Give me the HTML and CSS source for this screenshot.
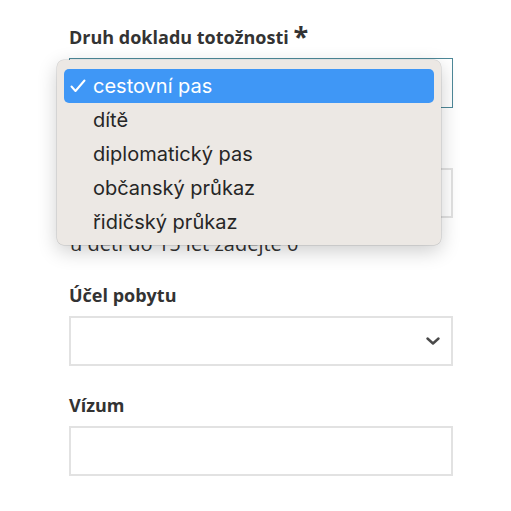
FILE: index.html
```html
<!DOCTYPE html>
<html lang="cs">
<head>
<meta charset="utf-8">
<title>Formulář</title>
<link rel="stylesheet" href="styles.css">
</head>
<body>
<form class="form">
  <div class="group">
    <label class="label">Druh dokladu totožnosti <span class="req">*</span></label>
    <div class="field select focused">
      <svg class="chev" width="14" height="8" viewBox="0 0 14 8"><polyline points="1.5,1.5 7,6.5 12.5,1.5" fill="none" stroke="#4a4a4a" stroke-width="2.4" stroke-linecap="round" stroke-linejoin="round"/></svg>
    </div>
    <ul class="menu">
      <li class="item selected"><svg class="check" width="16" height="14" viewBox="0 0 16 14"><polyline points="1.5,7.5 5.5,12 14.5,1.5" fill="none" stroke="#ffffff" stroke-width="2" stroke-linecap="round" stroke-linejoin="round"/></svg>cestovní pas</li>
      <li class="item">dítě</li>
      <li class="item">diplomatický pas</li>
      <li class="item">občanský průkaz</li>
      <li class="item">řidičský průkaz</li>
    </ul>
  </div>
  <div class="group">
    <label class="label"></label>
    <div class="field"></div>
    <p class="help">u dětí do 15 let zadejte 0</p>
  </div>
  <div class="group">
    <label class="label">Účel pobytu</label>
    <div class="field select">
      <svg class="chev" width="14" height="8" viewBox="0 0 14 8"><polyline points="1.5,1.5 7,6.5 12.5,1.5" fill="none" stroke="#4a4a4a" stroke-width="2.4" stroke-linecap="round" stroke-linejoin="round"/></svg>
    </div>
  </div>
  <div class="group">
    <label class="label">Vízum</label>
    <div class="field"></div>
  </div>
</form>
</body>
</html>
```
FILE: styles.css
```css
html, body {
  margin: 0;
  padding: 0;
  background: #ffffff;
}
.form {
  position: relative;
  width: 384px;
  padding: 26px 0 0 69px;
  font-family: "Open Sans", "Noto Sans", sans-serif;
  color: #333333;
}
.group {
  display: flex;
  flex-direction: column;
  margin-bottom: 28px;
}
.label {
  display: block;
  height: 22px;
  line-height: 22px;
  font-size: 18px;
  font-weight: 700;
  color: #333333;
  margin-bottom: 10px;
  white-space: nowrap;
}
.req {
  font-size: 27px;
  line-height: 0;
  vertical-align: -2px;
}
.field {
  box-sizing: border-box;
  height: 50px;
  border: 2px solid #e2e2e2;
  background: #ffffff;
  display: flex;
  align-items: center;
  justify-content: flex-end;
  padding-right: 11px;
}
.focused {
  border: 1px solid #4d8898;
  padding-right: 12px;
}
.chev {
  display: block;
}
.help {
  margin: 14px 0 0 1px;
  font-size: 20px;
  line-height: 24px;
  color: #333333;
  white-space: nowrap;
}
.menu {
  position: absolute;
  left: 57px;
  top: 60px;
  width: 384px;
  box-sizing: border-box;
  margin: 0;
  padding: 9px 7px 6px;
  list-style: none;
  background: #ece8e4;
  border-radius: 7px;
  box-shadow: 0 0 0 0.5px rgba(0,0,0,0.16), 0 6px 20px rgba(0,0,0,0.2);
  font-family: "Inter", "Liberation Sans", sans-serif;
  font-size: 20px;
  color: #262626;
}
.item {
  position: relative;
  height: 34px;
  line-height: 34px;
  padding-left: 29px;
  border-radius: 5px;
}
.selected {
  background: #3f97f6;
  color: #ffffff;
}
.check {
  position: absolute;
  left: 6px;
  top: 10px;
  display: block;
}
```
